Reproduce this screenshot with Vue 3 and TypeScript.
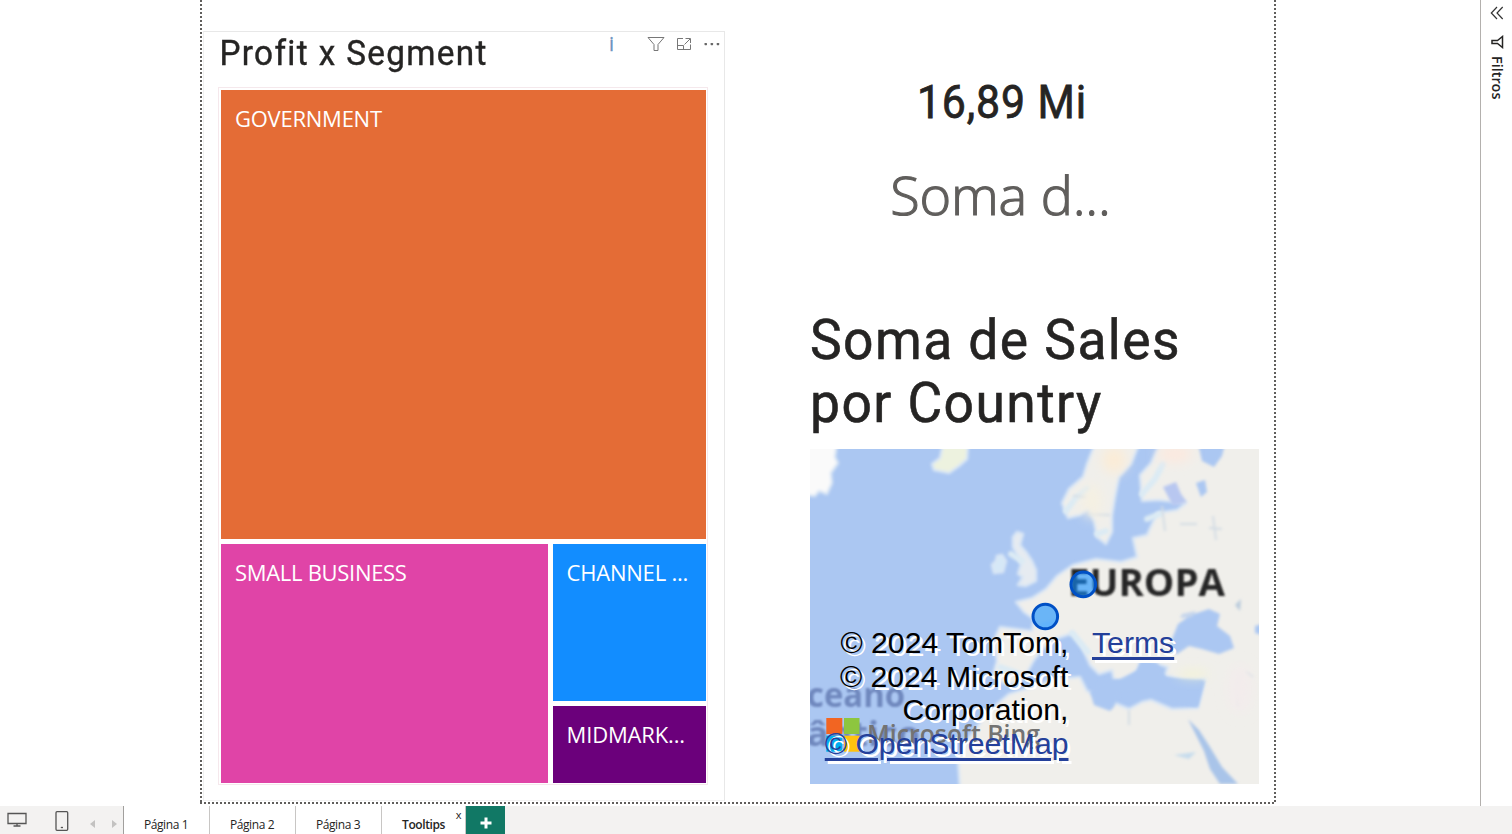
<script setup lang="ts">
interface Tab {
  label: string
  active?: boolean
}

interface Bubble {
  x: number
  y: number
}

const tabs: Tab[] = [
  { label: 'Página 1' },
  { label: 'Página 2' },
  { label: 'Página 3' },
  { label: 'Tooltips', active: true },
]

const bubbles: Bubble[] = [
  { x: 273.3, y: 135.4 },
  { x: 235.3, y: 167.5 },
]
</script>

<template>
  <div class="app">
    <div class="workspace">
      <main class="stage">
        <div class="report">
          <section class="tree-card">
            <header class="card-head">
              <h2 class="tree-title">Profit x Segment</h2>
              <div class="tools">
                <span class="info">i</span>
                <svg class="tool" width="18" height="16" viewBox="0 0 18 16">
                  <path d="M1 1.500H17L11 8.500V14.500H7V8.500Z" fill="none" stroke="#777" />
                </svg>
                <svg class="tool" width="16" height="14" viewBox="0 0 16 14">
                  <path d="M7 1.500H1.500V12.500H14.500V7.500M1.500 8.500H7.500V12.500M8.500 7.500L14 2M9.500 1.500H14.500V6" fill="none" stroke="#777" />
                </svg>
                <svg class="tool" width="16" height="4" viewBox="0 0 16 4">
                  <rect x="0.500" y="1" width="2.500" height="2.200" rx="0.600" fill="#666" />
                  <rect x="6.600" y="1" width="2.500" height="2.200" rx="0.600" fill="#666" />
                  <rect x="12.700" y="1" width="2.500" height="2.200" rx="0.600" fill="#666" />
                </svg>
              </div>
            </header>
            <div class="treemap">
              <div class="node government">GOVERNMENT</div>
              <div class="node small">SMALL BUSINESS</div>
              <div class="node channel">CHANNEL ...</div>
              <div class="node midmarket">MIDMARK...</div>
            </div>
          </section>

          <div class="right">
            <section class="kpi">
              <div class="kpi-value">16,89 Mi</div>
              <div class="kpi-label">Soma d...</div>
            </section>
            <section class="map-card">
              <h2 class="map-title">Soma de Sales<br />por Country</h2>
              <div class="map">
                <svg class="geo" width="449" height="335" viewBox="0 0 449 335">
                  <defs>
                    <filter id="soft" x="-5%" y="-5%" width="110%" height="110%">
                      <feGaussianBlur stdDeviation="1.8" />
                    </filter>
                    <filter id="label" x="-5%" y="-20%" width="110%" height="140%">
                      <feGaussianBlur stdDeviation="0.9" />
                    </filter>
                    <filter id="wide" x="-20%" y="-20%" width="140%" height="140%">
                      <feGaussianBlur stdDeviation="6" />
                    </filter>
                  </defs>
                  <rect width="449" height="335" fill="#abc7f2" />
                  <g filter="url(#soft)" fill="#f0efeb" stroke="#d9e6f5" stroke-width="2.500" stroke-linejoin="round">
                    <!-- Greenland and Iceland -->
                    <path d="M-5 -5H27L25 8L28 14L21 24L22 34L17 45L9 42L5 47L-5 46Z" fill="#fafafa" />
                    <path d="M133 -5H158L157 10L149 17L139 24L124 21L122 15L130 9Z" fill="#edf2df" />
                    <!-- British Isles -->
                    <path d="M203 88L207 83L213 85L210 96L216 103L222 112L226 121L226 132L216 137L208 136L213 128L208 125L211 115L206 104L203 98Z" fill="#e6ebf1" />
                    <path d="M192 106L196 112L193 123L184 124L182 116L186 112L187 107Z" fill="#d6e8f7" />
                    <!-- mainland -->
                    <path d="M285 -5L277 15L273 28L259 40L252 54L258 69L270 66L279 60L284 72L287 88L296 95L302 83L302 67L305 48L309 28L321 15L329 -5H350L341 14L330 26L332 52L348 51L376 54L367 61L347 64L337 86L323 89L327 108L311 113L286 110L263 116L247 127L236 140L222 149L206 153L214 163L224 170L222 182L190 178L184 191L187 212L183 226L193 234L204 235L214 229L224 211L233 199L248 189L263 184L272 198L280 216L289 225L302 221L304 231L315 232L328 221L330 211L344 214L358 218L355 226L373 231L395 230L391 246L388 259L362 260L341 251L332 253L319 260L295 250L277 242L270 228L245 230L222 238L199 245L178 263L157 292L148 310L150 340H455V-5Z" />
                  </g>
                  <g filter="url(#soft)" fill="#abc7f2">
                    <!-- seas cut into the land -->
                    <path d="M362 203L362 190L368 175L381 166L399 160L410 165L407 177L420 187L424 199L409 205L392 200L379 197L367 205Z" />
                    <path d="M304 258L309 245L336 242L358 252L388 258L395 232L376 230L356 229L347 214L332 211L326 222L310 230L294 231L280 243L284 256L300 262Z" />
                    <path d="M378 270L389 281L400 298L412 318L428 335H410L400 320L394 302Z" fill="#a9c4e9" />
                    <path d="M364 306L386 303L379 310Z" fill="#c6dced" />
                    <path d="M388 -5H415L412 7L404 18L392 12Z" />
                    <path d="M353 38L366 33L371 45L377 53L363 57Z" fill="#b8c7f0" />
                    <path d="M386 34L395 31L397 43L391 48Z" />
                    <path d="M445 177L452 175V186L445 184Z" />
                    <path d="M372 165L386 162L382 168L370 169Z" fill="#c5d5ec" />
                    <path d="M425 156L431 150L430 162Z" fill="#b9cbdc" />
                  </g>
                  <g filter="url(#soft)" fill="none" stroke="#dcebf4" stroke-width="6" stroke-linecap="round">
                    <path d="M256 62L265 50L277 40M287 85L296 82M332 45L345 30L353 15M337 70L350 65M201 105L212 112" />
                    <path d="M233 177L244 174M262 184L278 203M190 218L207 224" />
                  </g>
                  <g filter="url(#soft)" fill="none" stroke="#d3dce4" stroke-width="2">
                    <path d="M263 47L277 48M278 65L300 66M352 57L355 82M370 75H387M403 67L406 91M399 79L412 80M428 231V257M436 223L443 228M319 261V276" />
                  </g>
                  <g filter="url(#wide)">
                    <ellipse cx="304" cy="11" rx="12" ry="13" fill="#fbecd7" />
                    <ellipse cx="365" cy="5" rx="17" ry="9" fill="#fce9df" />
                    <ellipse cx="282" cy="52" rx="10" ry="17" fill="#f5f0e2" />
                    <ellipse cx="383" cy="225" rx="16" ry="3" fill="#f4f4cd" />
                    <ellipse cx="430" cy="240" rx="12" ry="25" fill="#f3ecec" />
                  </g>
                  <g class="ocean" filter="url(#label)">
                    <text x="-29" y="258" textLength="124" lengthAdjust="spacingAndGlyphs">Oceano</text>
                    <text x="-55" y="297" textLength="165" lengthAdjust="spacingAndGlyphs">Atlântico</text>
                  </g>
                  <text class="continent" filter="url(#label)" x="258" y="147" textLength="157" lengthAdjust="spacingAndGlyphs">EUROPA</text>
                  <rect x="16.300" y="269" width="16" height="16" fill="#f26522" />
                  <rect x="34" y="269" width="15.500" height="16" fill="#8dc63f" />
                  <rect x="16.300" y="286.700" width="16" height="16" fill="#00aeef" />
                  <rect x="34" y="286.700" width="15.500" height="16" fill="#ffc20e" />
                  <text class="bing" x="57" y="294" textLength="173" lengthAdjust="spacingAndGlyphs">Microsoft Bing</text>
                  <circle
                    v-for="b in bubbles"
                    :key="b.x"
                    :cx="b.x"
                    :cy="b.y"
                    r="12.3"
                    fill="#118dff"
                    fill-opacity="0.6"
                    stroke="#0050c5"
                    stroke-width="3"
                  />
                </svg>
                <div class="credits">
                  <div class="sources">
                    © 2024 TomTom,<br />© 2024 Microsoft<br />Corporation,<br /><a>© OpenStreetMap</a>
                  </div>
                  <a class="terms">Terms</a>
                </div>
              </div>
            </section>
          </div>
        </div>
      </main>

      <aside class="filters">
        <svg width="14" height="14" viewBox="0 0 14 14">
          <path d="M7 1L1.300 7L7 13M12.700 1L7 7L12.700 13" fill="none" stroke="#333" stroke-width="1.200" />
        </svg>
        <svg class="funnel" width="14" height="14" viewBox="0 0 14 14">
          <path d="M12.500 1.500V12.500L7.500 8.500H2V5.500H7.500Z" fill="none" stroke="#252423" stroke-width="1.500" />
        </svg>
        <span class="filters-label">Filtros</span>
      </aside>
    </div>

    <footer class="bar">
      <div class="views">
        <svg class="desktop" width="20" height="16" viewBox="0 0 20 16">
          <path d="M1 1.500H19V11.500H1ZM10 11.500V14M6.500 14H13.500" fill="none" stroke="#555" stroke-width="1.300" />
        </svg>
        <svg class="phone" width="14" height="20" viewBox="0 0 14 20">
          <rect x="1" y="0.700" width="11.700" height="18.600" rx="1" fill="none" stroke="#555" stroke-width="1.300" />
          <path d="M5.800 16.500H8" stroke="#555" stroke-width="1.300" />
        </svg>
        <svg class="prev" width="5" height="8" viewBox="0 0 5 8"><path d="M5 0V8L0 4Z" fill="#c3c2c1" /></svg>
        <svg class="next" width="5" height="8" viewBox="0 0 5 8"><path d="M0 0V8L5 4Z" fill="#c3c2c1" /></svg>
      </div>
      <div v-for="tab in tabs" :key="tab.label" class="tab" :class="{ active: tab.active }">
        <span>{{ tab.label }}</span>
        <span v-if="tab.active" class="close">x</span>
      </div>
      <button class="add" aria-label="+">
        <svg width="12" height="12" viewBox="0 0 12 12"><path d="M6 0.500V11.500M0.500 6H11.500" stroke="#fff" stroke-width="3" /></svg>
      </button>
    </footer>
  </div>
</template>

<style>
html,
body {
  margin: 0;
  overflow: hidden;
  background: #fff;
}
</style>

<style scoped>
.app {
  display: flex;
  flex-direction: column;
  width: 1512px;
  height: 834px;
  font-family: 'Open Sans', 'Noto Sans', sans-serif;
  color: #252423;
}
.workspace {
  display: flex;
  height: 806px;
}
.stage {
  flex: 1;
  padding-left: 200px;
}
.report {
  box-sizing: border-box;
  display: flex;
  width: 1076px;
  height: 804px;
  padding: 31px 0 3px 3px;
  background:
    repeating-linear-gradient(180deg, #605e5c 0 2px, transparent 2px 4px) 0 0 / 2px 100% no-repeat,
    repeating-linear-gradient(180deg, #605e5c 0 2px, transparent 2px 4px) 1074px 0 / 2px 100% no-repeat,
    repeating-linear-gradient(90deg, #605e5c 0 2px, transparent 2px 4px) 0 100% / 100% 2px no-repeat;
}
.tree-card {
  box-sizing: border-box;
  width: 522px;
  height: 770px;
  border: 1px solid #e8e8e8;
  border-left-color: #f0f0f0;
  border-bottom-color: #f3f3f3;
}
.card-head {
  display: flex;
  justify-content: space-between;
  height: 55px;
}
.tree-title,
.map-title {
  margin: 0;
  font-family: Roboto, sans-serif;
  font-weight: 400;
  white-space: nowrap;
  transform-origin: 0 0;
  -webkit-text-stroke: 0.4px #252423;
}
.tree-title {
  padding-left: 16px;
  font-size: 34.5px;
  line-height: 43px;
  letter-spacing: 1.4px;
  transform: scaleX(0.965);
}
.tools {
  display: flex;
  align-items: center;
  height: 24px;
  padding-right: 4px;
}
.tool {
  margin-left: 12px;
}
.info + .tool {
  margin-right: -1px;
}
.info {
  margin-right: 21px;
  font-size: 20px;
  line-height: 24px;
  color: #6b93c0;
  -webkit-text-stroke: 0.3px #6b93c0;
}
.treemap {
  box-sizing: border-box;
  display: grid;
  width: 490px;
  height: 698px;
  margin-left: 14px;
  padding: 2px 2px 1px 2px;
  grid-template-columns: 326.500px 153.500px;
  grid-template-rows: 449px 157px 77px;
  gap: 5px;
  border: 1px solid #f5e8ec;
}
.node {
  padding: 12px 0 0 14px;
  overflow: hidden;
  font-size: 22px;
  line-height: 32px;
  color: #fff;
  white-space: nowrap;
}
.government {
  grid-column: 1 / 3;
  background: #e46c36;
  letter-spacing: -0.250px;
}
.small {
  grid-row: 2 / 4;
  background: #e044a7;
  letter-spacing: -0.3px;
}
.channel {
  background: #128dff;
  letter-spacing: -0.200px;
}
.midmarket {
  background: #6b007b;
  letter-spacing: -0.150px;
}
.right {
  width: 449px;
  margin-left: 85px;
}
.kpi {
  height: 278px;
  padding-right: 68px;
  text-align: center;
}
.kpi-value {
  padding-top: 41px;
  font: 400 47px/60px Roboto, sans-serif;
  letter-spacing: 1px;
  transform: translateX(1.500px) scaleX(0.91);
  -webkit-text-stroke: 0.8px #252423;
}
.kpi-label {
  padding-top: 22px;
  font-size: 54px;
  line-height: 80px;
  font-weight: 300;
  letter-spacing: -0.200px;
  color: #605e5c;
  -webkit-text-stroke: 1.200px #605e5c;
}
.map-title {
  height: 140px;
  font-size: 56px;
  line-height: 63px;
  letter-spacing: 1.5px;
  transform: scaleX(0.953);
  -webkit-text-stroke-width: 0.600px;
}
.map {
  position: relative;
  width: 449px;
  height: 335px;
}
.geo {
  display: block;
}
.ocean {
  font: 700 34px 'Open Sans', sans-serif;
  fill: #7088be;
}
.continent {
  font: 700 38px 'Open Sans', sans-serif;
  fill: #272727;
}
.bing {
  font: 600 25px 'Open Sans', sans-serif;
  fill: #737373;
}
.credits {
  position: absolute;
  top: 177px;
  left: 0;
  display: flex;
  font: 30.200px/33.600px 'Liberation Sans', Arial, sans-serif;
  color: #000;
  text-shadow: 3px 3px 0 #fff;
}
.sources {
  width: 258.500px;
  text-align: right;
  white-space: nowrap;
}
.credits a {
  color: #24409a;
  text-decoration: underline;
  text-decoration-thickness: 3px;
  text-underline-offset: 3.500px;
}
.terms {
  margin-left: 23.500px;
}
.filters {
  box-sizing: border-box;
  display: flex;
  flex-direction: column;
  align-items: center;
  width: 32px;
  padding: 6px 0 0 1px;
  border-left: 1px solid #b3b0ad;
}
.funnel {
  margin-top: 15px;
}
.filters-label {
  margin-top: 7px;
  font-size: 14.400px;
  line-height: 20px;
  font-weight: 600;
  writing-mode: vertical-rl;
}
.bar {
  display: flex;
  height: 28px;
  background: #f3f2f1;
}
.views {
  box-sizing: border-box;
  display: flex;
  align-items: flex-start;
  width: 124px;
  padding: 5px 0 0 7px;
  border-right: 1px solid #a19f9d;
}
.desktop {
  margin-top: 1px;
}
.phone {
  margin-left: 28px;
}
.prev {
  margin: 9px 0 0 21px;
}
.next {
  margin: 9px 0 0 17px;
}
.tab {
  position: relative;
  box-sizing: border-box;
  width: 86px;
  padding: 9px 1px 0 0;
  border-right: 1px solid #c8c6c4;
  background: #fff;
  font-size: 12px;
  line-height: 19px;
  letter-spacing: -0.4px;
  text-align: center;
}
.tab.active {
  width: 84px;
  padding-right: 0;
  font-weight: 600;
}
.close {
  position: absolute;
  top: -1px;
  right: 4px;
  font-size: 11px;
  font-weight: 400;
}
.add {
  display: flex;
  align-items: center;
  justify-content: center;
  width: 39px;
  margin: 0;
  padding: 5px 0 0;
  border: 0;
  background: #117865;
}
</style>
